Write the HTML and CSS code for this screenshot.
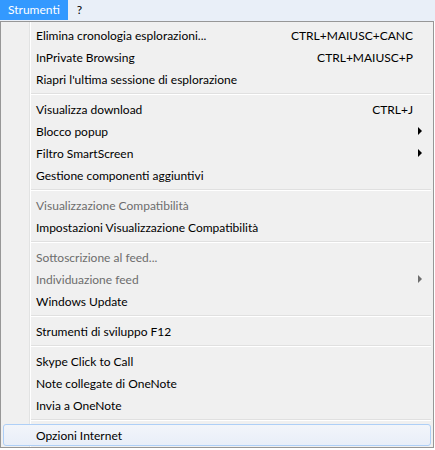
FILE: index.html
```html
<!DOCTYPE html>
<html lang="it">
<head>
<meta charset="utf-8">
<link rel="stylesheet" href="styles.css">
</head>
<body>
<div class="menubar">
  <div class="bar-item active">Strumenti</div>
  <div class="bar-item help">?</div>
</div>
<div class="menu">
  <div class="item"><span class="label">Elimina cronologia esplorazioni...</span><span class="key">CTRL+MAIUSC+CANC</span></div>
  <div class="item"><span class="label">InPrivate Browsing</span><span class="key">CTRL+MAIUSC+P</span></div>
  <div class="item"><span class="label">Riapri l'ultima sessione di esplorazione</span></div>
  <div class="sep"></div>
  <div class="item"><span class="label">Visualizza download</span><span class="key">CTRL+J</span></div>
  <div class="item sub"><span class="label">Blocco popup</span><span class="arrow"></span></div>
  <div class="item sub"><span class="label">Filtro SmartScreen</span><span class="arrow"></span></div>
  <div class="item"><span class="label">Gestione componenti aggiuntivi</span></div>
  <div class="sep"></div>
  <div class="item disabled"><span class="label">Visualizzazione Compatibilità</span></div>
  <div class="item"><span class="label">Impostazioni Visualizzazione Compatibilità</span></div>
  <div class="sep"></div>
  <div class="item disabled"><span class="label">Sottoscrizione al feed...</span></div>
  <div class="item sub disabled"><span class="label">Individuazione feed</span><span class="arrow"></span></div>
  <div class="item"><span class="label">Windows Update</span></div>
  <div class="sep"></div>
  <div class="item"><span class="label">Strumenti di sviluppo F12</span></div>
  <div class="sep"></div>
  <div class="item"><span class="label">Skype Click to Call</span></div>
  <div class="item"><span class="label">Note collegate di OneNote</span></div>
  <div class="item"><span class="label">Invia a OneNote</span></div>
  <div class="sep"></div>
  <div class="item hover"><span class="label">Opzioni Internet</span></div>
</div>
</body>
</html>
```
FILE: styles.css
```css
html, body {
  margin: 0;
  padding: 0;
  background: #ffffff;
}
body {
  font-family: "Lato", "Noto Sans", sans-serif;
  font-size: 12px;
  color: #000;
  width: 435px;
  height: 450px;
  overflow: hidden;
}
.menubar {
  display: flex;
  height: 20px;
  background: #e9eff8;
  padding-bottom: 1px;
}
.bar-item {
  padding: 0 8px 0 8px;
  line-height: 20px;
  color: #000;
}
.bar-item.help {
  padding-left: 9px;
}
.bar-item.active {
  background: #3399ff;
  color: #fff;
}
.menu {
  width: 434px;
  height: 427px;
  box-sizing: border-box;
  border: 1px solid #979797;
  background-color: #f0f0f0;
  background-image: linear-gradient(to right, transparent 28px, #e2e3e3 28px, #e2e3e3 29px, #ffffff 29px, #ffffff 30px, transparent 30px);
  padding: 2px;
}
.item {
  display: flex;
  align-items: center;
  height: 22px;
  padding: 0 17px 0 32px;
  box-sizing: border-box;
  border: 1px solid transparent;
  border-radius: 3px;
}
.label {
  flex: 1;
  white-space: nowrap;
}
.key {
  white-space: nowrap;
}
.disabled {
  color: #6d6d6d;
}
.sub {
  padding-right: 8px;
}
.arrow {
  width: 0;
  height: 0;
  border-top: 4px solid transparent;
  border-bottom: 4px solid transparent;
  border-left: 4px solid #000;
}
.disabled .arrow {
  border-left-color: #6d6d6d;
}
.sep {
  height: 8px;
  margin-left: 28px;
  display: flex;
  flex-direction: column;
  justify-content: center;
}
.sep::before {
  content: "";
  display: block;
  height: 1px;
  background: #e0e0e0;
}
.sep::after {
  content: "";
  display: block;
  height: 1px;
  background: #ffffff;
}
.hover {
  border-color: #aecff7;
  background: linear-gradient(#f2f5fa, #e8eef8);
}
```
